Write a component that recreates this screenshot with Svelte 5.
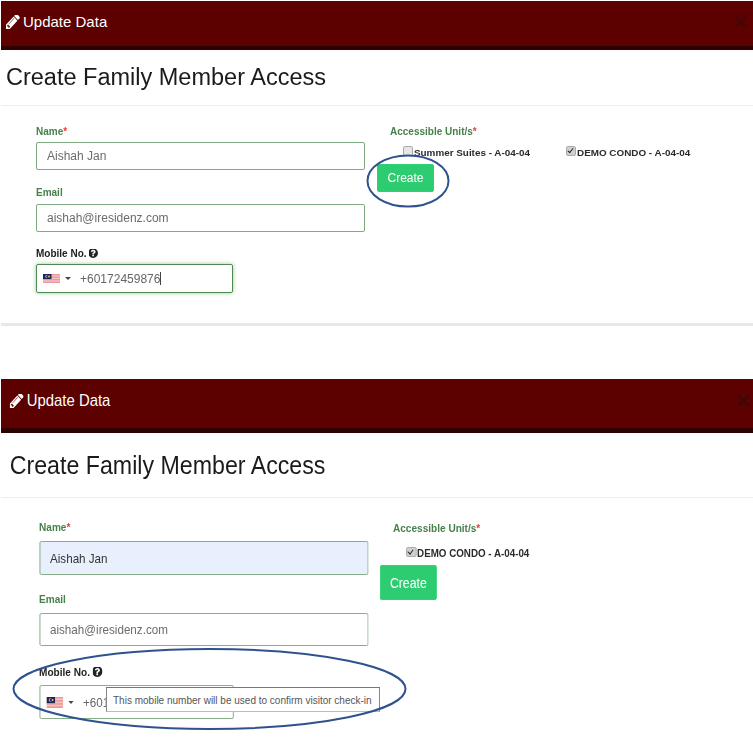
<script>
  const pencil = "M491 1536l91-91-235-235-91 91v107h128v128h107zm523-928q0-22-22-22-10 0-17 7l-542 542q-7 7-7 17 0 22 22 22 10 0 17-7l542-542q7-7 7-17zm-54-192l416 416-832 832h-416v-416zm683 96q0 53-37 90l-166 166-416-416 166-165q36-38 90-38 53 0 91 38l235 234q37 39 37 91z";
  const question = "M1024 1376v-192q0-14-9-23t-23-9h-192q-14 0-23 9t-9 23v192q0 14 9 23t23 9h192q14 0 23-9t9-23zm256-672q0-88-55.5-163t-138.5-116-170-41q-243 0-371 213-15 24 8 42l132 100q7 6 19 6 16 0 25-12 53-68 86-92 34-24 86-24 48 0 85.5 26t37.5 59q0 38-20 61t-68 45q-63 28-115.5 86.5t-52.5 125.5v36q0 14 9 23t23 9h192q14 0 23-9t9-23q0-19 21.5-49.5t54.5-49.5q32-18 49-28.5t46-35 44.5-48 28-60.5 12.5-81zm384 192q0 209-103 385.5t-279.5 279.5-385.5 103-385.5-103-279.5-279.5-103-385.5 103-385.5 279.5-279.5 385.5-103 385.5 103 279.5 279.5 103 385.5z";
</script>

{#snippet flag()}
  <svg class="flag" viewBox="0 0 18 10" preserveAspectRatio="none">
    <rect width="18" height="10" fill="#ea9a9a" />
    <rect y="1.4" width="18" height="1.4" fill="#f4c4c4" />
    <rect y="4.2" width="18" height="1.4" fill="#f4c4c4" />
    <rect y="7" width="18" height="1.4" fill="#f4c4c4" />
    <rect width="9" height="5.6" fill="#1f2560" />
    <circle cx="4" cy="2.8" r="1.6" fill="#e8c84a" />
    <circle cx="4.7" cy="2.8" r="1.3" fill="#1f2560" />
    <circle cx="6.4" cy="2.8" r="1" fill="#e8c84a" />
  </svg>
{/snippet}

{#snippet help()}
  <svg class="help" viewBox="256 256 1408 1408" preserveAspectRatio="none"><path d={question} fill="#222" /></svg>
{/snippet}

{#snippet head()}
  <header class="bar">
    <svg class="pencil" viewBox="128 256 1536 1408" preserveAspectRatio="none"><path d={pencil} fill="#fff" /></svg>
    <span class="title">Update Data</span>
    <svg class="close" viewBox="0 0 12 12" preserveAspectRatio="none"><path d="M1 1l10 10M11 1L1 11" stroke="#3f0808" stroke-width="2" fill="none" /></svg>
  </header>
{/snippet}

<div class="page">
  <section class="one">
    {@render head()}
    <div class="heading"><h1>Create Family Member Access</h1></div>
    <div class="form">
      <div class="left">
        <div class="label g">Name<span class="req">*</span></div>
        <input class="field" value="Aishah Jan" readonly />
        <div class="label g email">Email</div>
        <input class="field" value="aishah@iresidenz.com" readonly />
        <div class="label mob">Mobile No. {@render help()}</div>
        <div class="phone focus">
          {@render flag()}
          <span class="caret"></span>
          <span class="num">+60172459876</span><span class="cursor"></span>
        </div>
      </div>
      <div class="right">
        <div class="label g">Accessible Unit/s<span class="req">*</span></div>
        <div class="units">
          <label class="unit"><input type="checkbox" />Summer Suites - A-04-04</label>
          <label class="unit"><input type="checkbox" checked />DEMO CONDO - A-04-04</label>
        </div>
        <button class="create">Create</button>
      </div>
    </div>
    <div class="thick"></div>
  </section>

  <section class="two">
    {@render head()}
    <div class="heading"><h1>Create Family Member Access</h1></div>
    <div class="form">
      <div class="left">
        <div class="label g">Name<span class="req">*</span></div>
        <input class="field auto" value="Aishah Jan" readonly />
        <div class="label g email">Email</div>
        <input class="field" value="aishah@iresidenz.com" readonly />
        <div class="label mob">Mobile No. {@render help()}</div>
        <div class="phone">
          {@render flag()}
          <span class="caret"></span>
          <span class="num">+601</span>
          <div class="tip">This mobile number will be used to confirm visitor check-in</div>
        </div>
      </div>
      <div class="right">
        <div class="label g">Accessible Unit/s<span class="req">*</span></div>
        <div class="units">
          <label class="unit"><input type="checkbox" checked />DEMO CONDO - A-04-04</label>
        </div>
        <button class="create">Create</button>
      </div>
    </div>
  </section>

  <svg class="marks" viewBox="0 0 753 749">
    <ellipse cx="408" cy="181" rx="40.5" ry="25.5" />
    <ellipse cx="209.5" cy="689" rx="196" ry="40" />
  </svg>
</div>

<style>
  :global(body) { margin: 0; background: #fff; }
  .page {
    position: relative;
    width: 753px;
    height: 749px;
    box-sizing: border-box;
    padding: 1px 0 0 1px;
    overflow: hidden;
    font-family: "Liberation Sans", Arial, sans-serif;
    filter: blur(0.35px);
  }
  .marks {
    position: absolute;
    left: 0;
    top: 0;
    width: 753px;
    height: 749px;
    pointer-events: none;
    fill: none;
    stroke: #2f528f;
    stroke-width: 2;
  }
  .bar {
    display: flex;
    align-items: center;
    background: #5c0000;
    border-bottom: 4px solid #2e0000;
    box-sizing: border-box;
    color: #fff;
  }
  .pencil { flex: none; }
  .title { margin-left: 3px; }
  .close { margin-left: auto; flex: none; }
  .heading { box-sizing: border-box; border-bottom: 1px solid #eeeeee; display: flex; align-items: center; }
  h1 { margin: 0; font-weight: 400; color: #1b1b1b; white-space: nowrap; }
  .form { display: flex; }
  .left { flex: none; }
  .right { flex: none; }
  .label { font-weight: 700; color: #222; white-space: nowrap; }
  .g { color: #47804a; }
  .req { color: #e04040; }
  .help { height: 9px; vertical-align: -1px; }
  .field {
    display: block;
    width: 100%;
    box-sizing: border-box;
    margin: 0;
    border: 1px solid #7fa980;
    border-radius: 2px;
    background: #fff;
    color: #6b6b6b;
    outline: none;
    font-family: inherit;
  }
  .auto { background: #e8f0fe; color: #333; }
  .phone {
    position: relative;
    display: flex;
    align-items: center;
    box-sizing: border-box;
    border: 1px solid #7fa980;
    border-radius: 2px;
    background: #fff;
    color: #666;
  }
  .focus { border-color: #4f8a52; box-shadow: 0 0 4px rgba(90, 160, 90, 0.6); }
  .flag { flex: none; }
  .caret {
    width: 0;
    height: 0;
    flex: none;
    border-left: 3px solid transparent;
    border-right: 3px solid transparent;
    border-top: 3px solid #444;
  }
  .cursor { width: 1px; height: 13px; background: #444; flex: none; }
  .tip {
    position: absolute;
    background: #fff;
    border: 1px solid #777;
    border-bottom-color: #bbb;
    box-sizing: border-box;
    white-space: nowrap;
    color: #555;
    display: flex;
    align-items: center;
  }
  .units { display: flex; }
  .unit {
    display: flex;
    align-items: center;
    font-weight: 700;
    color: #2b2b2b;
    white-space: nowrap;
  }
  .unit input {
    appearance: none;
    position: relative;
    box-sizing: border-box;
    height: 10px;
    margin: 0 2px 0 0;
    flex: none;
    align-self: flex-start;
    border: 1px solid #aaa;
    border-radius: 2px;
    background: #e6e6e6;
  }
  .unit input:checked { background: #d0d0d0; }
  .unit input:checked::after {
    content: "";
    position: absolute;
    left: 25%;
    top: 0;
    width: 30%;
    height: 5px;
    border-right: 1.5px solid #222;
    border-bottom: 1.5px solid #222;
    transform: rotate(40deg);
  }
  .create {
    display: block;
    padding: 0;
    border: 1px solid #2fcf74;
    border-radius: 2px;
    background: #2ecc71;
    color: #fff;
    font-family: inherit;
  }
  .thick { height: 3px; background: #e6e8ea; margin-top: 30px; }

  /* first screenshot */
  .one .bar { height: 49px; padding: 0 6px 4px 5px; }
  .one .pencil { width: 14px; height: 14px; }
  .one .title { font-size: 15px; }
  .one .close { width: 12px; height: 11px; }
  .one h1 { font-size: 23.5px; margin-left: 5px; }
  .one .heading { height: 56px; }
  .one .form { padding: 19px 0 0 35px; }
  .one .left { width: 329px; }
  .one .right { margin-left: 25px; }
  .one .label { font-size: 10px; line-height: 14px; }
  .one .help { width: 9px; }
  .one .field { height: 28px; padding: 0 10px; font-size: 12px; }
  .one .label + .field { margin-top: 3px; }
  .one .email { margin-top: 16px; }
  .one .email + .field { margin-top: 4px; }
  .one .mob { margin-top: 15px; }
  .one .phone { margin-top: 3px; width: 197px; height: 29px; padding-left: 6px; font-size: 12px; }
  .one .flag { width: 17px; height: 9px; }
  .one .caret { margin-left: 5px; }
  .one .num { margin-left: 9px; }
  .one .units { margin: 8px 0 0 13px; font-size: 9.9px; line-height: 12px; }
  .one .unit { width: 163px; }
  .one .unit input { width: 10px; margin-top: -1px; margin-right: 1px; }
  .one .create { margin: 5px 0 0 -13px; width: 57px; height: 28px; font-size: 12px; }

  /* second screenshot: the same screen, narrowed horizontally */
  .two {
    margin-top: 53px;
    width: 860px;
    transform: scaleX(0.875);
    transform-origin: left top;
  }
  .two .bar { height: 54px; padding: 0 4px 6px 10px; border-bottom-width: 5px; }
  .two .pencil { width: 16px; height: 14px; }
  .two .title { margin-left: 3.5px; font-size: 17px; }
  .two .close { width: 15px; height: 13px; }
  .two h1 { font-size: 26.5px; margin-left: 10px; }
  .two .heading { height: 65px; }
  .two .form { padding: 23px 0 0 43.5px; }
  .two .left { width: 376px; }
  .two .right { margin-left: 28.5px; }
  .two .label { font-size: 11.5px; line-height: 12px; }
  .two .help { width: 11px; height: 10px; }
  .two .field { height: 34px; padding: 0 11.5px; font-size: 13.3px; }
  .two .label + .field { margin-top: 8px; }
  .two .email { margin-top: 18px; }
  .two .email + .field { height: 33px; }
  .two .mob { margin-top: 20px; }
  .two .phone { margin-top: 7px; width: 222px; height: 34px; padding-left: 7px; font-size: 13.3px; }
  .two .flag { width: 19.5px; height: 11px; }
  .two .caret { margin-left: 5.7px; }
  .two .num { margin-left: 11px; }
  .two .tip { left: 75.5px; top: 1px; width: 313px; height: 25px; padding-left: 7px; font-size: 11.45px; }
  .two .right .label { margin-top: 1px; }
  .two .units { margin: 13px 0 0 15px; font-size: 11.2px; line-height: 13px; }
  .two .unit input { width: 11.5px; margin-right: 1px; }
  .two .create { margin: 5px 0 0 -15px; width: 65px; height: 35px; font-size: 14px; }
</style>
